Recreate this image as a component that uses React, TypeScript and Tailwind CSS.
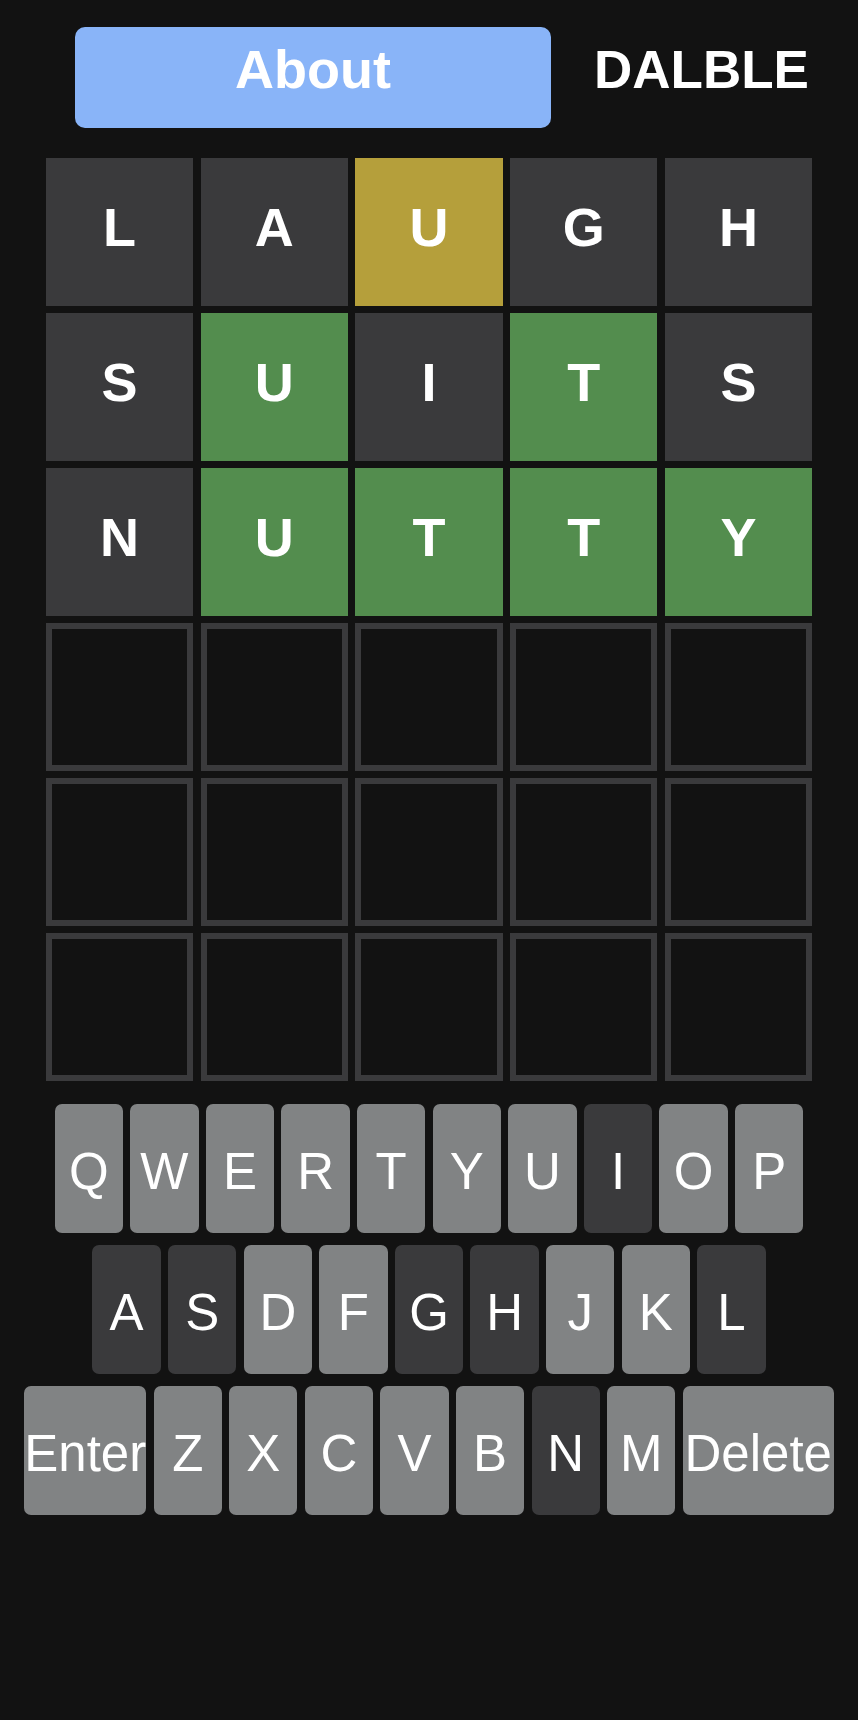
import React from "react";

type Tone = "absent" | "present" | "correct";

const guesses: { letter: string; tone: Tone }[][] = [
  [
    { letter: "L", tone: "absent" },
    { letter: "A", tone: "absent" },
    { letter: "U", tone: "present" },
    { letter: "G", tone: "absent" },
    { letter: "H", tone: "absent" },
  ],
  [
    { letter: "S", tone: "absent" },
    { letter: "U", tone: "correct" },
    { letter: "I", tone: "absent" },
    { letter: "T", tone: "correct" },
    { letter: "S", tone: "absent" },
  ],
  [
    { letter: "N", tone: "absent" },
    { letter: "U", tone: "correct" },
    { letter: "T", tone: "correct" },
    { letter: "T", tone: "correct" },
    { letter: "Y", tone: "correct" },
  ],
];

const toneClass: Record<Tone, string> = {
  absent: "bg-[#3a3a3c]",
  present: "bg-[#b59f3b]",
  correct: "bg-[#538d4e]",
};

// letters that were guessed but are not in the word
const used = new Set(["L", "A", "G", "H", "S", "I", "N"]);

const rows = [
  ["Q", "W", "E", "R", "T", "Y", "U", "I", "O", "P"],
  ["A", "S", "D", "F", "G", "H", "J", "K", "L"],
  ["Enter", "Z", "X", "C", "V", "B", "N", "M", "Delete"],
];

function Key({ label }: { label: string }) {
  const width =
    label === "Enter" ? "w-[122px]" : label === "Delete" ? "w-[151px]" : "w-[68.3px]";
  const bg = used.has(label) ? "bg-[#3a3a3c]" : "bg-[#818384]";
  return (
    <button
      className={`${width} ${bg} flex h-[128.5px] shrink-0 items-center justify-center overflow-visible whitespace-nowrap rounded-[7px] pt-2 text-[51px] font-normal text-white`}
    >
      {label}
    </button>
  );
}

export default function App() {
  const emptyRows = 6 - guesses.length;
  return (
    <div className="min-h-[1720px] w-full bg-[#121212] font-['Liberation_Sans',Arial,sans-serif] text-white">
      <header className="flex items-center pl-[75px] pt-[27px]">
        <button className="flex h-[100.5px] w-[476px] items-center justify-center rounded-[10px] bg-[#89b4f8] pb-4 text-[54px] font-bold text-white">
          About
        </button>
        <h1 className="ml-[43px] pb-4 text-[53px] font-bold leading-none">DALBLE</h1>
      </header>

      <div className="mx-auto mt-[30.5px] grid w-[766px] grid-cols-5 gap-[7.5px]">
        {guesses.map((row, r) =>
          row.map((cell, c) => (
            <div
              key={`${r}-${c}`}
              className={`${toneClass[cell.tone]} flex h-[147.5px] items-center justify-center pb-[8px] text-[54px] font-bold`}
            >
              {cell.letter}
            </div>
          ))
        )}
        {Array.from({ length: emptyRows * 5 }).map((_, i) => (
          <div key={`e-${i}`} className="h-[147.5px] border-[6px] border-[#3a3a3c]" />
        ))}
      </div>

      <div className="mt-[23.5px] flex flex-col items-center gap-[12.5px]">
        {rows.map((row, i) => (
          <div key={i} className="flex gap-[7.3px]">
            {row.map((k) => (
              <Key key={k} label={k} />
            ))}
          </div>
        ))}
      </div>
    </div>
  );
}
